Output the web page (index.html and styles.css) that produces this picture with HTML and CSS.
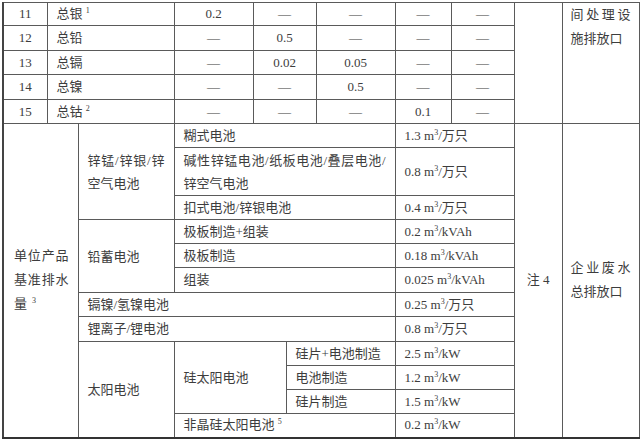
FILE: index.html
```html
<!DOCTYPE html>
<html lang="zh">
<head>
<meta charset="utf-8">
<title>排水量表</title>
<link rel="stylesheet" href="styles.css">
</head>
<body>
<table class="sheet">
<colgroup>
<col class="c1"><col class="c2"><col class="c3"><col class="c4"><col class="c5"><col class="c6"><col class="c7"><col class="c8"><col class="c9"><col class="c10"><col class="c11">
</colgroup>
<tbody>
<tr class="h23">
<td class="num">11</td>
<td colspan="2">总银 <sup>1</sup></td>
<td class="num">0.2</td>
<td colspan="2" class="num">—</td>
<td class="num">—</td>
<td class="num">—</td>
<td class="num">—</td>
<td rowspan="5"></td>
<td rowspan="5" class="outlet top">间处理设施排放口</td>
</tr>
<tr class="h25">
<td class="num">12</td>
<td colspan="2">总铅</td>
<td class="num">—</td>
<td colspan="2" class="num">0.5</td>
<td class="num">—</td>
<td class="num">—</td>
<td class="num">—</td>
</tr>
<tr>
<td class="num">13</td>
<td colspan="2">总镉</td>
<td class="num">—</td>
<td colspan="2" class="num">0.02</td>
<td class="num">0.05</td>
<td class="num">—</td>
<td class="num">—</td>
</tr>
<tr class="h25">
<td class="num">14</td>
<td colspan="2">总镍</td>
<td class="num">—</td>
<td colspan="2" class="num">—</td>
<td class="num">0.5</td>
<td class="num">—</td>
<td class="num">—</td>
</tr>
<tr>
<td class="num">15</td>
<td colspan="2">总钴 <sup>2</sup></td>
<td class="num">—</td>
<td colspan="2" class="num">—</td>
<td class="num">—</td>
<td class="num">0.1</td>
<td class="num">—</td>
</tr>
<tr>
<td colspan="2" rowspan="12" class="side">单位产品基准排水量<sup class="gap">3</sup></td>
<td rowspan="3" class="grp">锌锰/锌银/锌空气电池</td>
<td colspan="4">糊式电池</td>
<td colspan="2">1.3 m<sup>3</sup>/万只</td>
<td rowspan="12" class="num">注 4</td>
<td rowspan="12" class="outlet">企业废水总排放口</td>
</tr>
<tr class="h48">
<td colspan="4" class="wrap">碱性锌锰电池/纸板电池/叠层电池/锌空气电池</td>
<td colspan="2">0.8 m<sup>3</sup>/万只</td>
</tr>
<tr>
<td colspan="4">扣式电池/锌银电池</td>
<td colspan="2">0.4 m<sup>3</sup>/万只</td>
</tr>
<tr>
<td rowspan="3" class="grp">铅蓄电池</td>
<td colspan="4">极板制造+组装</td>
<td colspan="2">0.2 m<sup>3</sup>/kVAh</td>
</tr>
<tr>
<td colspan="4">极板制造</td>
<td colspan="2">0.18 m<sup>3</sup>/kVAh</td>
</tr>
<tr class="h25">
<td colspan="4">组装</td>
<td colspan="2">0.025 m<sup>3</sup>/kVAh</td>
</tr>
<tr>
<td colspan="5">镉镍/氢镍电池</td>
<td colspan="2">0.25 m<sup>3</sup>/万只</td>
</tr>
<tr class="h25">
<td colspan="5">锂离子/锂电池</td>
<td colspan="2">0.8 m<sup>3</sup>/万只</td>
</tr>
<tr>
<td rowspan="4" class="grp">太阳电池</td>
<td colspan="2" rowspan="3">硅太阳电池</td>
<td colspan="2">硅片+电池制造</td>
<td colspan="2">2.5 m<sup>3</sup>/kW</td>
</tr>
<tr>
<td colspan="2">电池制造</td>
<td colspan="2">1.2 m<sup>3</sup>/kW</td>
</tr>
<tr>
<td colspan="2">硅片制造</td>
<td colspan="2">1.5 m<sup>3</sup>/kW</td>
</tr>
<tr>
<td colspan="4">非晶硅太阳电池 <sup>5</sup></td>
<td colspan="2">0.2 m<sup>3</sup>/kW</td>
</tr>
</tbody>
</table>
</body>
</html>
```
FILE: styles.css
```css
html, body {
  margin: 0;
  padding: 0;
  background: #ffffff;
}
body {
  padding: 2px 0 0 2px;
}
.sheet {
  border-collapse: collapse;
  table-layout: fixed;
  width: 637px;
  font-family: "Liberation Serif", "Noto Sans CJK SC", serif;
  font-size: 13px;
  line-height: 18px;
  color: #3d3d3d;
  border-bottom: 2px solid #333333;
  border-left: 2px solid #444444;
}
.c1 { width: 44px; }
.c2 { width: 31px; }
.c3 { width: 96px; }
.c4 { width: 79px; }
.c5 { width: 33px; }
.c6 { width: 30px; }
.c7 { width: 79px; }
.c8 { width: 56px; }
.c9 { width: 63px; }
.c10 { width: 48px; }
.c11 { width: 77px; }
.sheet tr { height: 24px; }
.sheet tr.h23 { height: 23px; }
.sheet tr.h25 { height: 25px; }
.sheet tr.h48 { height: 48px; }
.sheet td {
  border: 1px solid #5a5a5a;
  padding: 0 9px;
  vertical-align: middle;
  text-align: left;
  overflow: hidden;
}
.sheet td.num {
  text-align: center;
  padding: 0;
}
.sheet td.side {
  padding: 0 9px 0 10px;
  text-align: justify;
  line-height: 24px;
}
.sheet td.grp {
  text-align: justify;
  line-height: 23px;
}
.sheet td.wrap {
  text-align: justify;
  line-height: 23px;
}
.sheet td.outlet {
  padding: 0 8px;
  text-align: justify;
  line-height: 24px;
}
.sheet td.outlet.top {
  vertical-align: top;
}
.sheet sup {
  font-size: 8px;
  line-height: 0;
  vertical-align: 5px;
}
.sheet sup.gap {
  margin-left: 5px;
}
```
